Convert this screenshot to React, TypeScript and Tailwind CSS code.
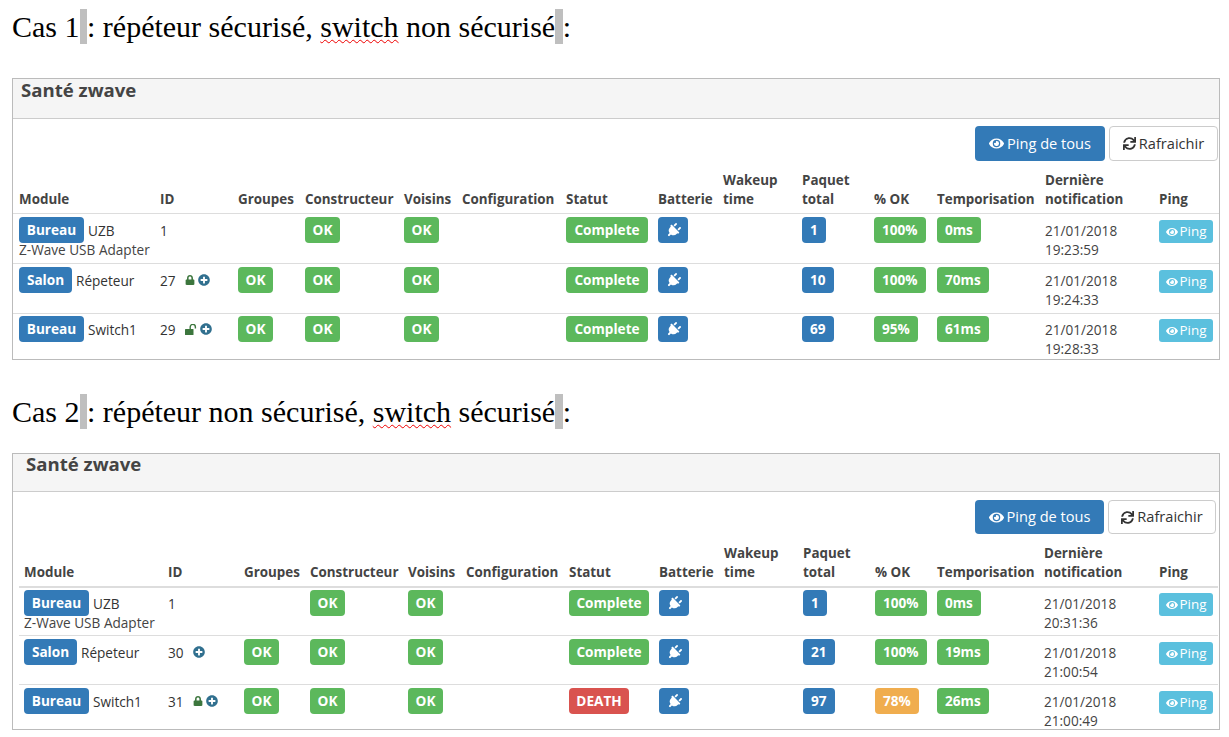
import React from "react";
import { FaEye, FaLock, FaPlug, FaPlusCircle, FaSync } from "react-icons/fa";

type Row = {
  room: string;
  name: string;
  sub?: string;
  id: string;
  lock?: "closed" | "open";
  plus?: boolean;
  groups: boolean;
  status: string;
  statusBad?: boolean;
  total: string;
  ok: string;
  okWarn?: boolean;
  delay: string;
  date: string;
  time: string;
};

function Badge({ color, children, size }: { color: string; children: React.ReactNode; size?: string }) {
  return (
    <span
      className={`inline-flex h-[26px] items-center justify-center rounded-[4px] text-[13.6px] leading-none font-bold text-white ${size ?? "px-[8px]"} ${color}`}
    >
      {children}
    </span>
  );
}

const green = "bg-[#5cb85c]";
const blue = "bg-[#337ab7]";

function Cell({ children }: { children?: React.ReactNode }) {
  return <div className="min-w-0">{children}</div>;
}

function Title({ text }: { text: string }) {
  return <span className="self-end text-[13.4px] leading-[19px] font-bold whitespace-nowrap text-[#444]">{text}</span>;
}

function OkBadge() {
  return (
    <Badge color={green} size="w-[35px]">
      OK
    </Badge>
  );
}

function OpenLock() {
  return (
    <svg width="12" height="11" viewBox="0 0 12 11" className="text-[#3c763d]">
      <rect x="0" y="5" width="8.5" height="6" rx="0.6" fill="currentColor" />
      <path d="M5.2 5.5V3a2.6 2.6 0 0 1 5.2 0v1.6" fill="none" stroke="currentColor" strokeWidth="1.4" />
    </svg>
  );
}

function Heading({ n, before, word, after }: { n: string; before: string; word: string; after: string }) {
  return (
    <h2 className="flex h-[35px] items-center font-['Liberation_Serif',serif] text-[30px] leading-[35px] font-normal whitespace-pre text-black">
      <span>Cas {n}</span>
      <span className="h-[35px] w-[7.5px] bg-[#bfbfbf]" />
      <span>: {before}</span>
      <span className="underline decoration-[#e00] decoration-wavy decoration-1 underline-offset-2">{word}</span>
      <span> {after}</span>
      <span className="h-[35px] w-[7.5px] bg-[#bfbfbf]" />
      <span>:</span>
    </h2>
  );
}

function Panel({
  rows,
  gridClass,
  rowClasses,
  titleClass,
  headClass,
  headBorder,
  bodyClass,
  toolbarClass,
  tableClass,
  primaryBtn,
  secondaryBtn,
  completeWidth,
}: {
  rows: Row[];
  gridClass: string;
  rowClasses: string[];
  titleClass: string;
  headClass: string;
  headBorder: string;
  bodyClass: string;
  toolbarClass: string;
  tableClass: string;
  primaryBtn: string;
  secondaryBtn: string;
  completeWidth: string;
}) {
  return (
    <section className="w-[1208px] border border-[#bbb] font-['Open_Sans',sans-serif] text-[#333]">
      <div className={`border-b border-[#ccc] bg-[#f5f5f5] ${headClass}`}>
        <h3 className={`text-[18.6px] font-bold text-[#444] ${titleClass}`}>Santé zwave</h3>
      </div>
      <div className={bodyClass}>
        <div className={`flex justify-end gap-[4px] ${toolbarClass}`}>
          <button className={`flex items-center justify-center gap-[3px] rounded-[4px] bg-[#337ab7] text-[14.6px] text-white ${primaryBtn}`}>
            <FaEye className="text-[15px]" />
            Ping de tous
          </button>
          <button className={`flex items-center justify-center gap-[3px] rounded-[4px] border border-[#ccc] bg-white text-[14.6px] text-[#333] ${secondaryBtn}`}>
            <FaSync className="text-[13px]" />
            Rafraichir
          </button>
        </div>
        <div className={tableClass}>
          <div className={`grid pb-[4px] ${gridClass} ${headBorder}`}>
            <Title text="Module" />
            <Title text="ID" />
            <Title text="Groupes" />
            <Title text="Constructeur" />
            <Title text="Voisins" />
            <Title text="Configuration" />
            <Title text="Statut" />
            <Title text="Batterie" />
            <span className="self-end text-[13.4px] leading-[19px] font-bold text-[#444]">
              Wakeup
              <br />
              time
            </span>
            <span className="self-end text-[13.4px] leading-[19px] font-bold text-[#444]">
              Paquet
              <br />
              total
            </span>
            <Title text="% OK" />
            <Title text="Temporisation" />
            <span className="self-end text-[13.4px] leading-[19px] font-bold whitespace-nowrap text-[#444]">
              Dernière
              <br />
              notification
            </span>
            <Title text="Ping" />
          </div>
          {rows.map((r, i) => (
            <div
              key={r.id}
              className={`grid text-[13.6px] leading-[19px] ${gridClass} ${rowClasses[i]} ${i > 0 ? "border-t border-[#ddd]" : ""}`}
            >
              <div className="whitespace-nowrap">
                <div className="flex items-center gap-[4px]">
                  <Badge color={blue} size={r.room === "Salon" ? "w-[53px]" : "w-[65px]"}>
                    {r.room}
                  </Badge>
                  <span>{r.name}</span>
                </div>
                {r.sub && <div className="-mt-[3px] text-[#444]">{r.sub}</div>}
              </div>
              <div className="flex h-[26px] items-center gap-[9px]">
                <span>{r.id}</span>
                <span className="flex items-center gap-[3px]">
                  {r.lock === "closed" && <FaLock className="text-[10px] text-[#3c763d]" />}
                  {r.lock === "open" && <OpenLock />}
                  {r.plus && <FaPlusCircle className="text-[12px] text-[#31708f]" />}
                </span>
              </div>
              <Cell>{r.groups && <OkBadge />}</Cell>
              <Cell>
                <OkBadge />
              </Cell>
              <Cell>
                <OkBadge />
              </Cell>
              <Cell />
              <Cell>
                <Badge color={r.statusBad ? "bg-[#d9534f]" : green} size={r.statusBad ? "w-[60px]" : completeWidth}>
                  {r.status}
                </Badge>
              </Cell>
              <Cell>
                <Badge color={blue} size="w-[30px]">
                  <FaPlug className="rotate-45 text-[15px]" />
                </Badge>
              </Cell>
              <Cell />
              <Cell>
                <Badge color={blue}>{r.total}</Badge>
              </Cell>
              <Cell>
                <Badge color={r.okWarn ? "bg-[#f0ad4e]" : green}>{r.ok}</Badge>
              </Cell>
              <Cell>
                <Badge color={green}>{r.delay}</Badge>
              </Cell>
              <div className="pt-[4px] text-[#444]">
                {r.date}
                <br />
                {r.time}
              </div>
              <div className="pt-[3px]">
                <button className="flex h-[23px] w-[54px] items-center justify-center gap-[2px] rounded-[3px] bg-[#5bc0de] text-[13.4px] text-white">
                  <FaEye className="text-[12px]" />
                  Ping
                </button>
              </div>
            </div>
          ))}
        </div>
      </div>
    </section>
  );
}

const first: Row[] = [
  { room: "Bureau", name: "UZB", sub: "Z-Wave USB Adapter", id: "1", groups: false, status: "Complete", total: "1", ok: "100%", delay: "0ms", date: "21/01/2018", time: "19:23:59" },
  { room: "Salon", name: "Répeteur", id: "27", lock: "closed", plus: true, groups: true, status: "Complete", total: "10", ok: "100%", delay: "70ms", date: "21/01/2018", time: "19:24:33" },
  { room: "Bureau", name: "Switch1", id: "29", lock: "open", plus: true, groups: true, status: "Complete", total: "69", ok: "95%", delay: "61ms", date: "21/01/2018", time: "19:28:33" },
];

const second: Row[] = [
  { room: "Bureau", name: "UZB", sub: "Z-Wave USB Adapter", id: "1", groups: false, status: "Complete", total: "1", ok: "100%", delay: "0ms", date: "21/01/2018", time: "20:31:36" },
  { room: "Salon", name: "Répeteur", id: "30", plus: true, groups: true, status: "Complete", total: "21", ok: "100%", delay: "19ms", date: "21/01/2018", time: "21:00:54" },
  { room: "Bureau", name: "Switch1", id: "31", lock: "closed", plus: true, groups: true, status: "DEATH", statusBad: true, total: "97", ok: "78%", okWarn: true, delay: "26ms", date: "21/01/2018", time: "21:00:49" },
];

export default function App() {
  return (
    <main className="h-[737px] w-[1229px] overflow-hidden bg-white pt-[9px] pl-[12px]">
      <Heading n="1" before="répéteur sécurisé, " word="switch" after="non sécurisé" />
      <div className="mt-[34px]">
        <Panel
          rows={first}
          gridClass="pl-[6px] grid-cols-[141px_78px_67px_99px_58px_104px_92px_65px_79px_72px_63px_108px_114px_60px]"
          rowClasses={["h-[49px] pt-[3px]", "h-[50px] pt-[3px]", "h-[46px] pt-[2px]"]}
          titleClass="leading-[22px] pl-[8px]"
          headClass="h-[40px]"
          headBorder="border-b border-[#ddd]"
          bodyClass=""
          toolbarClass="pt-[7px] pr-[1px]"
          tableClass="mt-[10px]"
          primaryBtn="h-[35px] w-[130px]"
          secondaryBtn="h-[35px] w-[109px]"
          completeWidth="w-[82px]"
        />
      </div>
      <div className="mt-[34px]">
        <Heading n="2" before="répéteur non sécurisé, " word="switch" after="sécurisé" />
      </div>
      <div className="mt-[24px]">
        <Panel
          rows={second}
          gridClass="pl-[5px] grid-cols-[144px_76px_66px_98px_58px_103px_90px_65px_79px_72px_62px_107px_115px_59px]"
          rowClasses={["h-[47px] pt-[2px]", "h-[49px] pt-[3px]", "h-[45px] pt-[3px]"]}
          titleClass="leading-[20px] pl-[13px]"
          headClass="h-[38px]"
          headBorder="border-b-2 border-[#ddd]"
          bodyClass="pl-[6px]"
          toolbarClass="pt-[8px] pr-[3px]"
          tableClass="mt-[10px] mr-[1px]"
          primaryBtn="h-[34px] w-[129px]"
          secondaryBtn="h-[34px] w-[108px]"
          completeWidth="w-[80px]"
        />
      </div>
    </main>
  );
}
